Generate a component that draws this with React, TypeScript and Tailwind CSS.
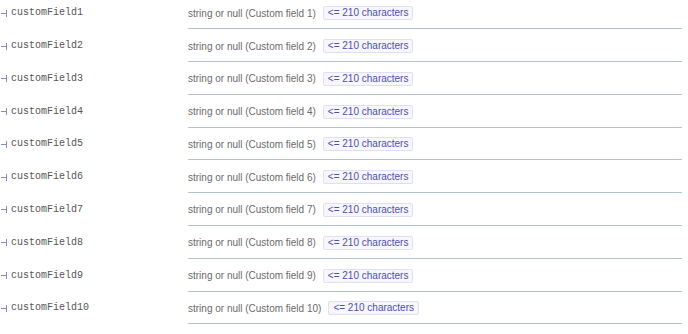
import React from "react";

const rows = Array.from({ length: 10 }, (_, i) => i + 1);

export default function App() {
  return (
    <div className="w-[688px] h-[334px] overflow-hidden bg-white">
      <div className="mt-[-3.6px] flex flex-col">
        {rows.map((n) => (
          <div key={n} className="flex h-[32.8px]">
            <div className="w-[188px] shrink-0 flex items-start pt-[6.8px]">
              <div className="h-[20px] flex items-center pl-[1px]">
                <span className="inline-block w-[5px] h-px bg-[#8a8ac4]" />
                <span className="inline-block w-px h-[7px] bg-[#8a8ac4]" />
                <span
                  className="ml-[4px] text-[10px] leading-[20px] text-[#555]"
                  style={{ fontFamily: '"Liberation Mono", "Courier New", monospace' }}
                >
                  customField{n}
                </span>
              </div>
            </div>
            <div className="w-[494px] pt-[6.8px] border-b border-[#b4c3cc]">
              <div
                className="h-[20px] flex items-center text-[10px]"
                style={{ fontFamily: '"Liberation Sans", Arial, sans-serif' }}
              >
                <span className="text-[#6b6b6b]">string or null (Custom field {n})</span>
                <span className="ml-[7px] px-[4px] h-[14px] leading-[12px] border border-[#e0e0f3] bg-[#f6f6fc] rounded-[2px] text-[#5050ad]">
                  &lt;= 210 characters
                </span>
              </div>
            </div>
          </div>
        ))}
      </div>
    </div>
  );
}
